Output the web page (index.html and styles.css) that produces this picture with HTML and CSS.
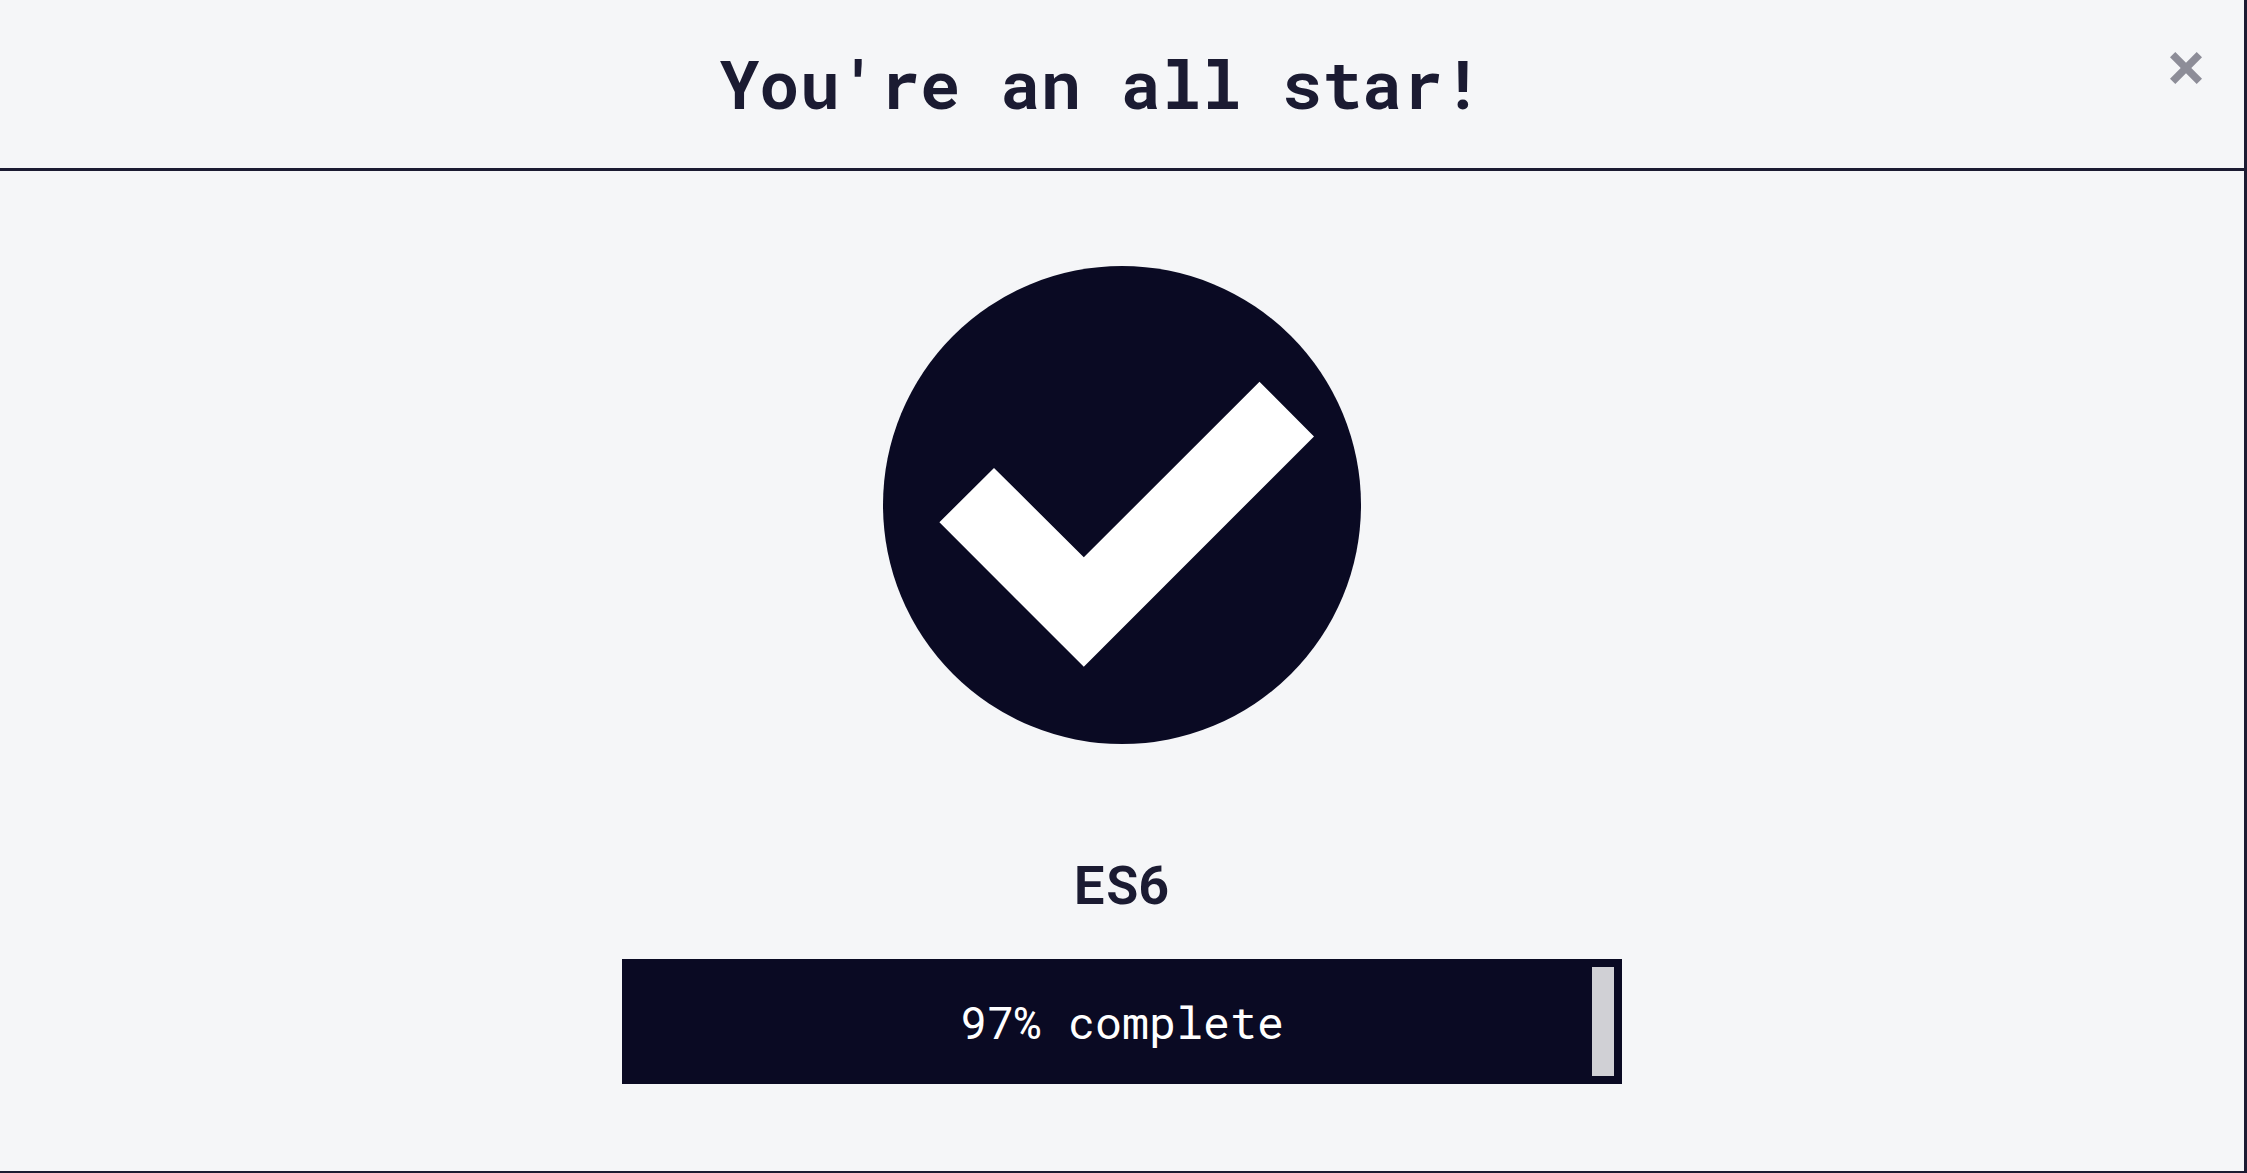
FILE: index.html
```html
<!DOCTYPE html>
<html lang="en">
<head>
<meta charset="utf-8">
<title>You're an all star!</title>
<link rel="stylesheet" href="styles.css">
</head>
<body>
<main class="modal">
  <header class="modal-header">
    <h1 class="modal-title">You're an all star!</h1>
    <button class="close" type="button" aria-label="Close">
      <svg class="close-icon" viewBox="0 0 32 32" aria-hidden="true"><path d="M5.3 0 16 10.7 26.7 0 32 5.3 21.3 16 32 26.7 26.7 32 16 21.3 5.3 32 0 26.7 10.7 16 0 5.3Z"/></svg>
    </button>
  </header>
  <section class="modal-body">
    <svg class="badge" viewBox="0 0 478 478" role="img" aria-label="Passed">
      <circle cx="239" cy="239" r="239" fill="#0a0a23"/>
      <path d="M376.5 115.7 431 170.4 200.8 400.8 56.4 256.3 111 201.9 200.8 291.3Z" fill="#fff"/>
    </svg>
    <h2 class="block-title" id="block-title">ES6</h2>
    <div class="progress" role="progressbar" aria-labelledby="block-title" aria-valuenow="97" aria-valuemin="0" aria-valuemax="100">
      <div class="progress-fill" style="width: 97%"></div>
      <span class="progress-label">97% complete</span>
    </div>
  </section>
</main>
</body>
</html>
```

FILE: styles.css
```css
* {
  box-sizing: border-box;
}

body {
  margin: 0;
  color: #1b1b32;
  background: #f5f6f8;
  font-family: "Roboto Mono", "DejaVu Sans Mono", monospace;
}

.modal {
  display: flex;
  flex-direction: column;
  min-height: 100vh;
  border-right: 3px solid #1b1b32;
  border-bottom: 2px solid #1b1b32;
}

.modal-header {
  display: flex;
  align-items: flex-start;
  padding: 40px 42px 40px 32px;
  border-bottom: 3px solid #1b1b32;
}

.modal-title {
  flex: 1;
  margin: 0;
  padding-bottom: 2px;
  font-size: 67px;
  line-height: 86px;
  font-weight: 700;
  text-align: center;
}

.close {
  padding: 12px 0;
  border: 0;
  background: none;
  cursor: pointer;
}

.close-icon {
  display: block;
  width: 32px;
  height: 32px;
  fill: #8d8d98;
}

.modal-body {
  display: flex;
  flex-direction: column;
  align-items: center;
  padding: 95px 32px 87px;
}

.badge {
  width: 478px;
  height: 478px;
}

.block-title {
  margin: 106px 0 42px;
  font-size: 54px;
  line-height: 67px;
  font-weight: 700;
}

.progress {
  display: grid;
  width: 100%;
  max-width: 1000px;
  height: 125px;
  background: #d0d0d5;
}

.progress > *,
.progress::after {
  grid-area: 1 / 1;
}

.progress::after {
  content: "";
  border: 8px solid #0a0a23;
}

.progress-fill {
  background: #0a0a23;
}

.progress-label {
  place-self: center;
  color: #fff;
  font-size: 45px;
  line-height: 60px;
}
```
